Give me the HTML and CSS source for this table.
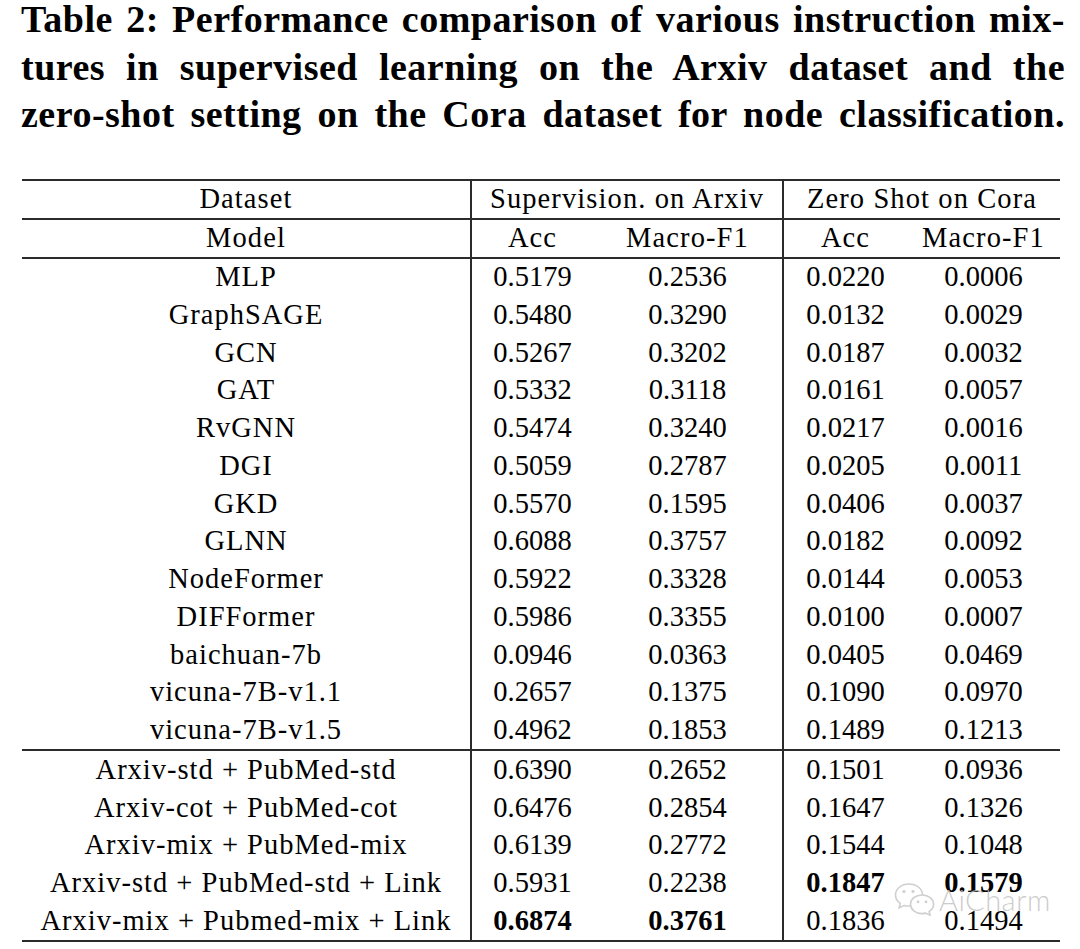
FILE: index.html
```html
<!DOCTYPE html>
<html lang="en">
<head>
<meta charset="utf-8">
<title>Table 2</title>
<link rel="stylesheet" href="styles.css">
</head>
<body>
<div class="page">
  <h1 class="caption">
    <span class="line">Table 2: Performance comparison of various instruction mix-</span>
    <span class="line">tures in supervised learning on the Arxiv dataset and the</span>
    <span class="line">zero-shot setting on the Cora dataset for node classification.</span>
  </h1>
  <div class="table-wrap">
    <table class="results">
      <colgroup>
        <col class="c-model">
        <col class="c-acc1">
        <col class="c-f1a">
        <col class="c-acc2">
        <col class="c-f1b">
      </colgroup>
      <thead>
        <tr class="group-row">
          <th class="sep">Dataset</th>
          <th colspan="2" class="sep">Supervision. on Arxiv</th>
          <th colspan="2">Zero Shot on Cora</th>
        </tr>
        <tr class="sub-row">
          <th class="sep">Model</th>
          <th>Acc</th>
          <th class="sep">Macro-F1</th>
          <th>Acc</th>
          <th>Macro-F1</th>
        </tr>
      </thead>
      <tbody class="baselines">
        <tr><td class="sep name">MLP</td><td>0.5179</td><td class="sep">0.2536</td><td>0.0220</td><td>0.0006</td></tr>
        <tr><td class="sep name">GraphSAGE</td><td>0.5480</td><td class="sep">0.3290</td><td>0.0132</td><td>0.0029</td></tr>
        <tr><td class="sep name">GCN</td><td>0.5267</td><td class="sep">0.3202</td><td>0.0187</td><td>0.0032</td></tr>
        <tr><td class="sep name">GAT</td><td>0.5332</td><td class="sep">0.3118</td><td>0.0161</td><td>0.0057</td></tr>
        <tr><td class="sep name">RvGNN</td><td>0.5474</td><td class="sep">0.3240</td><td>0.0217</td><td>0.0016</td></tr>
        <tr><td class="sep name">DGI</td><td>0.5059</td><td class="sep">0.2787</td><td>0.0205</td><td>0.0011</td></tr>
        <tr><td class="sep name">GKD</td><td>0.5570</td><td class="sep">0.1595</td><td>0.0406</td><td>0.0037</td></tr>
        <tr><td class="sep name">GLNN</td><td>0.6088</td><td class="sep">0.3757</td><td>0.0182</td><td>0.0092</td></tr>
        <tr><td class="sep name">NodeFormer</td><td>0.5922</td><td class="sep">0.3328</td><td>0.0144</td><td>0.0053</td></tr>
        <tr><td class="sep name">DIFFormer</td><td>0.5986</td><td class="sep">0.3355</td><td>0.0100</td><td>0.0007</td></tr>
        <tr><td class="sep name">baichuan-7b</td><td>0.0946</td><td class="sep">0.0363</td><td>0.0405</td><td>0.0469</td></tr>
        <tr><td class="sep name">vicuna-7B-v1.1</td><td>0.2657</td><td class="sep">0.1375</td><td>0.1090</td><td>0.0970</td></tr>
        <tr><td class="sep name">vicuna-7B-v1.5</td><td>0.4962</td><td class="sep">0.1853</td><td>0.1489</td><td>0.1213</td></tr>
      </tbody>
      <tbody class="mixtures">
        <tr><td class="sep name">Arxiv-std + PubMed-std</td><td>0.6390</td><td class="sep">0.2652</td><td>0.1501</td><td>0.0936</td></tr>
        <tr><td class="sep name">Arxiv-cot + PubMed-cot</td><td>0.6476</td><td class="sep">0.2854</td><td>0.1647</td><td>0.1326</td></tr>
        <tr><td class="sep name">Arxiv-mix + PubMed-mix</td><td>0.6139</td><td class="sep">0.2772</td><td>0.1544</td><td>0.1048</td></tr>
        <tr><td class="sep name">Arxiv-std + PubMed-std + Link</td><td>0.5931</td><td class="sep">0.2238</td><td><b>0.1847</b></td><td><b>0.1579</b></td></tr>
        <tr><td class="sep name">Arxiv-mix + Pubmed-mix + Link</td><td><b>0.6874</b></td><td class="sep"><b>0.3761</b></td><td>0.1836</td><td>0.1494</td></tr>
      </tbody>
    </table>
    <div class="watermark">
      <svg class="wm-icon" width="42" height="34" viewBox="0 0 42 34" aria-hidden="true">
        <path d="M15 2 C7.3 2 1.5 7 1.5 13 C1.5 16.6 3.4 19.6 6.4 21.6 L5 26 L10.2 23.4 C11.7 23.8 13.3 24 15 24 C22.7 24 28.5 19 28.5 13 C28.5 7 22.7 2 15 2 Z" fill="none" stroke="#cfcfcf" stroke-width="1.6" stroke-linejoin="round"/>
        <circle cx="10" cy="9.5" r="1.6" fill="#cfcfcf"/>
        <circle cx="19" cy="9.5" r="1.6" fill="#cfcfcf"/>
        <path d="M28 13 C21.4 13 16.5 17.2 16.5 22.3 C16.5 27.4 21.4 31.6 28 31.6 C29.3 31.6 30.6 31.4 31.8 31.1 L36.2 33.2 L35.1 29.5 C37.9 27.8 39.6 25.2 39.6 22.3 C39.6 17.2 34.7 13 28 13 Z" fill="#ffffff" stroke="#cfcfcf" stroke-width="1.6" stroke-linejoin="round"/>
        <circle cx="24" cy="19.8" r="1.4" fill="#cfcfcf"/>
        <circle cx="32" cy="19.8" r="1.4" fill="#cfcfcf"/>
      </svg>
      <span class="wm-text">AiCharm</span>
    </div>
  </div>
</div>
</body>
</html>
```
FILE: styles.css
```css
html, body {
  margin: 0;
  padding: 0;
  background: #ffffff;
}

.page {
  width: 1080px;
  color: #000000;
  font-family: "Liberation Serif", "Times New Roman", serif;
}

.caption {
  margin: -4px 0 0 21px;
  width: 1044px;
  font-size: 38px;
  font-weight: bold;
  line-height: 47.5px;
  letter-spacing: 0.5px;
}

.caption .line {
  display: block;
  white-space: nowrap;
  text-align: justify;
  text-align-last: justify;
}

.table-wrap {
  position: relative;
  margin: 40px 0 0 22px;
  width: 1038px;
}

.results {
  width: 1038px;
  table-layout: fixed;
  border-collapse: collapse;
  border-top: 2px solid #2b2b2b;
  border-bottom: 2px solid #2b2b2b;
  font-size: 28.5px;
  line-height: 1;
}

.c-model { width: 449px; }
.c-acc1 { width: 122px; }
.c-f1a { width: 190px; }
.c-acc2 { width: 124px; }
.c-f1b { width: 153px; }

.results th,
.results td {
  padding: 0;
  text-align: center;
  vertical-align: middle;
  font-weight: normal;
  white-space: nowrap;
}

.results th {
  letter-spacing: 1.1px;
}

.group-row th {
  height: 37px;
}

.sub-row th {
  height: 37px;
}

.results td {
  height: 37.75px;
}

.results td.name {
  letter-spacing: 1px;
}

.results td b {
  font-weight: bold;
}

.results .sep {
  border-right: 2px solid #2b2b2b;
}

.group-row th,
.sub-row th {
  border-bottom: 2px solid #2b2b2b;
}

.mixtures tr:first-child td {
  border-top: 2px solid #2b2b2b;
}

.watermark {
  position: absolute;
  left: 872px;
  top: 703px;
  display: flex;
  align-items: center;
  gap: 3px;
  pointer-events: none;
}

.wm-text {
  font-family: Lato, "Open Sans", sans-serif;
  font-weight: 300;
  font-size: 29px;
  letter-spacing: 0.5px;
  color: rgba(190, 190, 190, 0.8);
}
```
